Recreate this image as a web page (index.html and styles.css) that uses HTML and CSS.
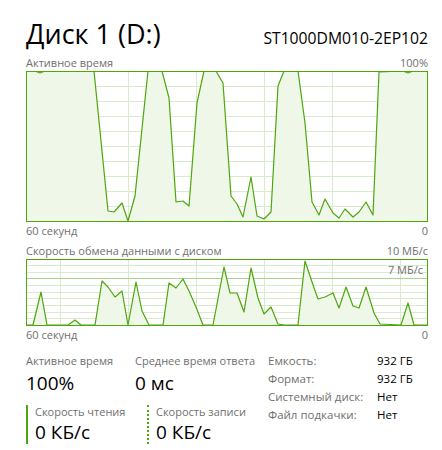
FILE: index.html
```html
<!DOCTYPE html>
<html>
<head>
    <meta charset="utf-8" />
    <title>Диск 1 (D:)</title>
    <link rel="stylesheet" href="styles.css">
</head>
<body>
    <div id="panel">
        <div id="fejlec">
            <h1 class="cim">Диск 1 (D:)</h1>
            <div class="modell">ST1000DM010-2EP102</div>
        </div>

        <div class="tengely felso"><span>Активное время</span><span>100%</span></div>
        <svg class="grafikon" width="402" height="151" viewBox="26 71 402 151">
            <g class="racs">
                <line x1="60.5" y1="71" x2="60.5" y2="222" />
                <line x1="128.5" y1="71" x2="128.5" y2="222" />
                <line x1="196.5" y1="71" x2="196.5" y2="222" />
                <line x1="264.5" y1="71" x2="264.5" y2="222" />
                <line x1="332.5" y1="71" x2="332.5" y2="222" />
                <line x1="400.5" y1="71" x2="400.5" y2="222" />
                <line x1="26" y1="86.5" x2="428" y2="86.5" />
                <line x1="26" y1="101.5" x2="428" y2="101.5" />
                <line x1="26" y1="116.5" x2="428" y2="116.5" />
                <line x1="26" y1="131.5" x2="428" y2="131.5" />
                <line x1="26" y1="146.5" x2="428" y2="146.5" />
                <line x1="26" y1="161.5" x2="428" y2="161.5" />
                <line x1="26" y1="176.5" x2="428" y2="176.5" />
                <line x1="26" y1="191.5" x2="428" y2="191.5" />
                <line x1="26" y1="206.5" x2="428" y2="206.5" />
            </g>
            <polygon class="terulet" points="26,71 35,71 40,73 45,71 94,71 108,211 114,212 122,203 128,221 135,196 148,71 162,71 169,98 176,202 183,201 189,206 197,103 204,71 216,71 220,78 223,83 231,196 237,204 243,217 251,177 257,216 264,219 271,212 278,86 284,71 298,71 305,123 312,202 319,215 325,199 333,213 339,218 345,209 353,217 359,212 366,202 373,215 379,72 403,71 408,73 413,71 428,71 428,221 26,221" />
            <polyline class="vonal" points="26,71 35,71 40,73 45,71 94,71 108,211 114,212 122,203 128,221 135,196 148,71 162,71 169,98 176,202 183,201 189,206 197,103 204,71 216,71 220,78 223,83 231,196 237,204 243,217 251,177 257,216 264,219 271,212 278,86 284,71 298,71 305,123 312,202 319,215 325,199 333,213 339,218 345,209 353,217 359,212 366,202 373,215 379,72 403,71 408,73 413,71 428,71" />
            <rect class="keret" x="26.5" y="71.5" width="401" height="150" />
        </svg>
        <div class="tengely also"><span>60 секунд</span><span>0</span></div>

        <div class="tengely felso kozte"><span>Скорость обмена данными с диском</span><span>10 МБ/с</span></div>
        <div class="grafikon_doboz">
            <svg class="grafikon" width="402" height="67" viewBox="26 259 402 67">
                <g class="racs">
                    <line x1="60.5" y1="259" x2="60.5" y2="326" />
                    <line x1="128.5" y1="259" x2="128.5" y2="326" />
                    <line x1="196.5" y1="259" x2="196.5" y2="326" />
                    <line x1="264.5" y1="259" x2="264.5" y2="326" />
                    <line x1="332.5" y1="259" x2="332.5" y2="326" />
                    <line x1="400.5" y1="259" x2="400.5" y2="326" />
                    <line x1="26" y1="265.5" x2="428" y2="265.5" />
                    <line x1="26" y1="272.5" x2="428" y2="272.5" />
                    <line x1="26" y1="285.5" x2="428" y2="285.5" />
                    <line x1="26" y1="292.5" x2="428" y2="292.5" />
                    <line x1="26" y1="298.5" x2="428" y2="298.5" />
                    <line x1="26" y1="305.5" x2="428" y2="305.5" />
                    <line x1="26" y1="312.5" x2="428" y2="312.5" />
                    <line x1="26" y1="318.5" x2="428" y2="318.5" />
                </g>
                <line class="skala" x1="26" y1="278.5" x2="428" y2="278.5" />
                <polygon class="terulet" points="26,325 33,325 41,292 47,325 68,325 75,320 81,325 95,325 102,281 108,287 115,297 122,291 128,325 136,282 142,311 149,325 163,325 169,283 176,288 183,279 189,291 196,307 203,325 213,325 224,267 230,293 237,293 244,312 251,268 258,298 264,314 271,307 278,324 284,325 298,325 305,261 312,282 318,299 325,297 333,293 339,308 346,287 353,306 359,308 366,287 374,313 380,324 401,325 408,303 414,325 428,325" />
                <polyline class="vonal" points="26,325 33,325 41,292 47,325 68,325 75,320 81,325 95,325 102,281 108,287 115,297 122,291 128,325 136,282 142,311 149,325 163,325 169,283 176,288 183,279 189,291 196,307 203,325 213,325 224,267 230,293 237,293 244,312 251,268 258,298 264,314 271,307 278,324 284,325 298,325 305,261 312,282 318,299 325,297 333,293 339,308 346,287 353,306 359,308 366,287 374,313 380,324 401,325 408,303 414,325 428,325" />
                <rect class="keret" x="26.5" y="259.5" width="401" height="66" />
            </svg>
            <span class="skala_felirat">7 МБ/с</span>
        </div>
        <div class="tengely also"><span>60 секунд</span><span>0</span></div>

        <div id="adatok">
            <div class="bal">
                <div class="ertekek">
                    <div>
                        <div class="cimke">Активное время</div>
                        <div class="ertek">100%</div>
                    </div>
                    <div>
                        <div class="cimke">Среднее время ответа</div>
                        <div class="ertek">0 мс</div>
                    </div>
                </div>
                <div class="io">
                    <div class="io_elem olvas">
                        <div class="cimke io_cimke">Скорость чтения</div>
                        <div class="ertek">0 КБ/с</div>
                    </div>
                    <div class="io_elem ir">
                        <div class="cimke io_cimke">Скорость записи</div>
                        <div class="ertek">0 КБ/с</div>
                    </div>
                </div>
            </div>
            <dl class="tulajdonsagok">
                <dt>Емкость:</dt><dd>932 ГБ</dd>
                <dt>Формат:</dt><dd>932 ГБ</dd>
                <dt>Системный диск:</dt><dd>Нет</dd>
                <dt>Файл подкачки:</dt><dd>Нет</dd>
            </dl>
        </div>
    </div>
</body>
</html>
```

FILE: styles.css
```css
html, body {
    margin: 0;
    background-color: white;
    color: black;
    font-family: "Open Sans", "Noto Sans", Arial, sans-serif;
}

#panel {
    padding: 16px 14px 0 26px;
}

#fejlec {
    display: flex;
    justify-content: space-between;
    align-items: baseline;
    height: 39px;
}

.cim {
    margin: 0;
    font-size: 27px;
    font-weight: normal;
    line-height: 36px;
}

.modell {
    font-size: 15.7px;
}

.tengely {
    display: flex;
    justify-content: space-between;
    font-size: 11px;
    color: #707070;
}

.felso {
    line-height: 16px;
}

.also {
    line-height: 18px;
}

.kozte {
    margin-top: 3px;
}

.grafikon {
    display: block;
}

.grafikon_doboz {
    position: relative;
}

.racs line {
    stroke: #d9ebcc;
    stroke-width: 1;
}

.skala {
    stroke: #a9d48d;
    stroke-width: 1;
}

.terulet {
    fill: #eff7e9;
}

.vonal {
    fill: none;
    stroke: #4da60c;
    stroke-width: 1.2;
    stroke-linejoin: round;
}

.keret {
    fill: none;
    stroke: #4da60c;
    stroke-width: 1;
}

.skala_felirat {
    position: absolute;
    top: 3px;
    right: 5px;
    font-size: 11px;
    line-height: 16px;
    color: #707070;
}

#adatok {
    display: flex;
    align-items: flex-start;
    margin-top: 8px;
}

.bal {
    width: 242px;
}

.ertekek {
    display: grid;
    grid-template-columns: 109px auto;
}

.cimke {
    font-size: 11px;
    line-height: 18px;
    color: #707070;
    white-space: nowrap;
}

.ertek {
    font-size: 19px;
    line-height: 26px;
}

.io {
    display: flex;
    margin-top: 9px;
}

.io_elem {
    box-sizing: border-box;
    width: 121px;
    height: 39px;
    padding-left: 7px;
    border-left: 2px solid #4da60c;
}

.io_elem.ir {
    border-left-style: dotted;
}

.io_cimke {
    line-height: 14px;
}

.tulajdonsagok {
    display: grid;
    grid-template-columns: 109px auto;
    margin: 0;
    font-size: 11.5px;
    line-height: 18px;
}

.tulajdonsagok dt {
    color: #707070;
}

.tulajdonsagok dd {
    margin: 0;
}
```
